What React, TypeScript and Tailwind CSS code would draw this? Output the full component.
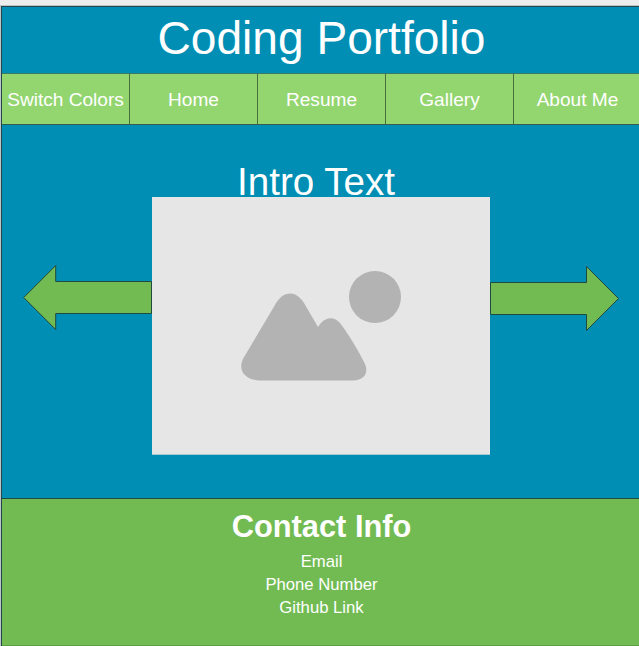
const navItems = ["Switch Colors", "Home", "Resume", "Gallery", "About Me"];
const contactLines = ["Email", "Phone Number", "Github Link"];

function Arrow({ direction }: { direction: "left" | "right" }) {
  const points =
    direction === "left"
      ? "0.7,32.5 32.7,0.5 32.7,16.5 128.5,16.5 128.5,48.5 32.7,48.5 32.7,64.5"
      : "129.5,32.5 97.5,0.5 97.5,16.5 1.5,16.5 1.5,48.5 97.5,48.5 97.5,64.5";
  return (
    <svg width="130" height="66" viewBox="0 0 130 66" className="block" aria-hidden="true">
      <polygon points={points} fill="#72bb53" stroke="#204b3e" strokeWidth="1" />
    </svg>
  );
}

function Placeholder() {
  return (
    <div className="h-[258px] w-[338px] shrink-0 border-b border-[#a3c9d4] bg-[#e6e6e6]">
      <svg width="338" height="257" viewBox="152 197 338 257" className="block" aria-hidden="true">
        <circle cx="375" cy="297" r="26" fill="#b3b3b3" />
        <path
          d="M243.5 358 L275 305 C283 290 296 290 304 303 L318 327 C325 316 334 316 340 323 C350 336 359 352 364 362 C369 371 366 380 353 380.5 H260 C245 380 237 370 243.5 358 Z"
          fill="#b3b3b3"
        />
      </svg>
    </div>
  );
}

export default function App() {
  return (
    <div className="flex h-[646px] w-[639px] flex-col overflow-hidden bg-[#ededed] pt-[5px] font-['Liberation_Sans',Arial,sans-serif] text-white">
      <div className="flex flex-1 flex-col border-l border-t border-[#bdc6c6]">
        <div className="flex flex-1 flex-col border-l border-t border-[#23464e] bg-[#008eb4]">
          <header className="flex h-[66px] items-center justify-center pb-[3px] pl-[2px]">
            <h1 className="whitespace-nowrap text-[46.1px] leading-none">Coding Portfolio</h1>
          </header>
          <nav className="flex h-[52px] border-b border-t border-b-[#335f50] border-t-[#397b65] bg-[#93d56f]">
            {navItems.map((item) => (
              <a
                key={item}
                className="flex w-[128px] shrink-0 items-center justify-center whitespace-nowrap border-r border-[#4b6e3c] pt-[2px] text-[19.1px] last:border-r-0 last:pr-px"
              >
                {item}
              </a>
            ))}
          </nav>
          <main className="flex h-[373px] flex-col">
            <h2 className="flex h-[72px] items-end justify-center pr-[9px] text-[38.6px] leading-[30px]">Intro Text</h2>
            <div className="flex">
              <div className="relative z-10 mr-[-1px] pl-[21px] pt-[68px]">
                <Arrow direction="left" />
              </div>
              <Placeholder />
              <div className="relative z-10 ml-[-1px] pt-[69px]">
                <Arrow direction="right" />
              </div>
            </div>
          </main>
          <footer className="flex flex-1 flex-col items-center border-b border-t border-b-[#5b9f45] border-t-[#204b3e] bg-[#72bb53] pl-[2px] pt-[10px]">
            <h3 className="text-[30.8px] font-bold leading-[36px]">Contact Info</h3>
            <div className="pt-[5px] text-center text-[16.7px] leading-[23px]">
              {contactLines.map((line) => (
                <p key={line}>{line}</p>
              ))}
            </div>
          </footer>
        </div>
      </div>
    </div>
  );
}
